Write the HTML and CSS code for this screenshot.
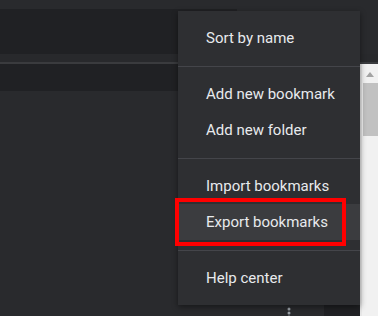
FILE: index.html
```html
<!DOCTYPE html>
<html>
<head>
<meta charset="utf-8">
<link rel="stylesheet" href="styles.css">
</head>
<body>
<div class="page">
  <div class="topbar"></div>
  <div class="toolbar"><div class="toolbar-dark"></div></div>
  <div class="strip"></div>
  <div class="divider"></div>
  <div class="main">
    <div class="content">
      <div class="row-dark"></div>
      <div class="list">
        <div class="list-body">
          <div class="kebab">
            <svg width="4" height="12" viewBox="0 0 4 12"><circle cx="2" cy="2" r="1.5" fill="#9aa0a6"/><circle cx="2" cy="6" r="1.5" fill="#9aa0a6"/><circle cx="2" cy="10" r="1.5" fill="#9aa0a6"/></svg>
          </div>
        </div>
        <div class="list-side"></div>
      </div>
    </div>
    <div class="scrollbar">
      <div class="arrow"></div>
      <div class="thumb"></div>
    </div>
  </div>

  <div class="menu">
    <div class="item">Sort by name</div>
    <div class="sep"></div>
    <div class="item">Add new bookmark</div>
    <div class="item">Add new folder</div>
    <div class="sep"></div>
    <div class="item">Import bookmarks</div>
    <div class="item active">Export bookmarks</div>
    <div class="sep"></div>
    <div class="item">Help center</div>
  </div>
  <div class="highlight-box"></div>
</div>
</body>
</html>
```
FILE: styles.css
```css
html, body {
  margin: 0;
  padding: 0;
  background: #292a2d;
}
.page {
  position: relative;
  width: 378px;
  height: 316px;
  overflow: hidden;
  display: flex;
  flex-direction: column;
  font-family: Roboto, "Liberation Sans", sans-serif;
}
.topbar {
  height: 9px;
  background: #292a2d;
}
.toolbar {
  height: 45px;
  display: flex;
  background: #292a2d;
}
.toolbar-dark {
  width: 237px;
  background: #202124;
}
.strip {
  height: 8px;
  background: #28292c;
}
.divider {
  height: 2px;
  background: #3a3b3e;
}
.main {
  flex: 1;
  display: flex;
}
.content {
  flex: 1;
  display: flex;
  flex-direction: column;
}
.row-dark {
  height: 27px;
  background: #202124;
}
.list {
  flex: 1;
  display: flex;
}
.list-body {
  flex: 1;
  display: flex;
  align-items: flex-end;
  background: #292a2d;
}
.kebab {
  margin-left: 287px;
  margin-bottom: -3px;
  line-height: 0;
}
.list-side {
  width: 36px;
  background: #202124;
}
.scrollbar {
  width: 18px;
  background: #f1f1f1;
  border-left: 2px solid #e6e6e6;
  box-sizing: border-box;
  display: flex;
  flex-direction: column;
  align-items: center;
}
.arrow {
  margin-top: 8px;
  width: 0;
  height: 0;
  border-left: 4.5px solid transparent;
  border-right: 4.5px solid transparent;
  border-bottom: 5px solid #a3a3a3;
}
.thumb {
  margin-top: 6px;
  width: 15px;
  height: 53px;
  background: #c1c1c1;
}
.menu {
  position: absolute;
  left: 178px;
  top: 11px;
  width: 182px;
  padding: 9px 0;
  background: #2e2f32;
  box-shadow: 0 2px 6px rgba(0, 0, 0, 0.45);
  display: flex;
  flex-direction: column;
}
.item {
  height: 36px;
  display: flex;
  align-items: center;
  padding-left: 28px;
  font-size: 15px;
  color: #e8eaed;
  white-space: nowrap;
}
.item.active {
  background: #3b3c3f;
}
.sep {
  height: 1px;
  margin: 10px 0 9px;
  background: #44454a;
}
.highlight-box {
  position: absolute;
  left: 175px;
  top: 198px;
  width: 171px;
  height: 48px;
  box-sizing: border-box;
  border: 4px solid #ff0000;
}
```
